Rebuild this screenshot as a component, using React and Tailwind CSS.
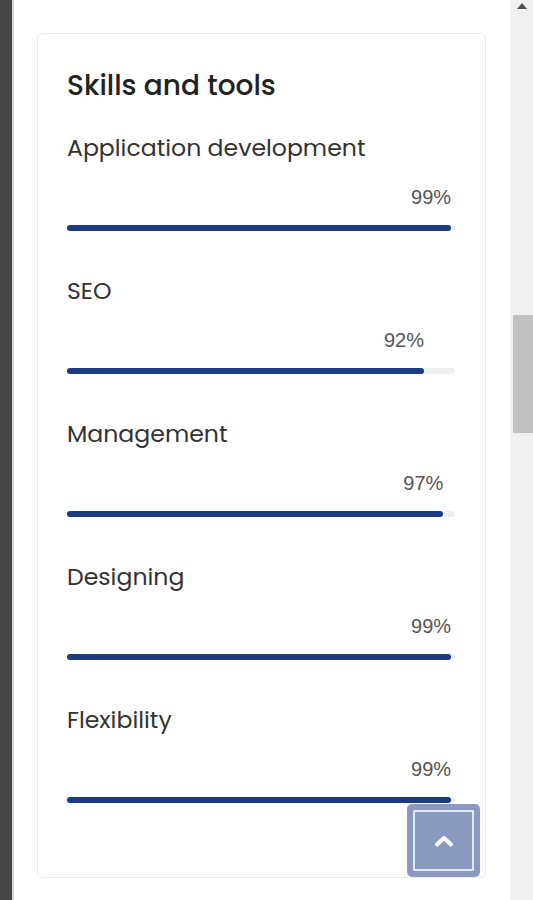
import React from "react";

const skills = [
  { name: "Application development", value: 99 },
  { name: "SEO", value: 92 },
  { name: "Management", value: 97 },
  { name: "Designing", value: 99 },
  { name: "Flexibility", value: 99 },
];

export default function App() {
  return (
    <div className="relative flex w-[533px] h-[900px] overflow-hidden bg-white">
      <div className="w-[12px] h-full bg-[#464646]" />
      <div className="w-[2px] h-full bg-[#d6d6d6]" />
      <div className="flex-1 h-full bg-white pl-[23px] pt-[33px]">
        <div className="w-[449px] h-[845px] border border-[#ececec] rounded-[6px] pl-[29px] pr-[30px] pt-[34px]">
          <h2
            className="text-[28px] leading-[36px] text-[#222] font-medium"
            style={{ fontFamily: "Poppins, 'Noto Sans', sans-serif" }}
          >
            Skills and tools
          </h2>
          <div className="flex flex-col mt-[27px]">
            {skills.map((s) => (
              <div key={s.name} className="h-[143px]">
                <div
                  className="text-[23.6px] leading-[34px] text-[#333]"
                  style={{ fontFamily: "Poppins, 'Noto Sans', sans-serif" }}
                >
                  {s.name}
                </div>
                <div className="w-[388px] mt-[20px]">
                  <div className="relative h-[24px]" style={{ width: `${s.value}%` }}>
                    <span
                      className="absolute right-0 top-0 text-[20px] leading-[24px] text-[#555]"
                      style={{ fontFamily: "'Liberation Sans', Arial, sans-serif" }}
                    >
                      {s.value}%
                    </span>
                  </div>
                  <div className="mt-[16px] h-[6px] w-full rounded-full bg-[#efefef]">
                    <div className="h-full rounded-full bg-[#1c3a80]" style={{ width: `${s.value}%` }} />
                  </div>
                </div>
              </div>
            ))}
          </div>
        </div>
      </div>
      <div className="relative w-[23px] h-full bg-[#f1f1f1]">
        <div className="absolute left-[7px] top-[3px] w-0 h-0 border-l-[5px] border-r-[5px] border-b-[6px] border-l-transparent border-r-transparent border-b-[#505050]" />
        <div className="absolute left-[3px] top-[315px] w-[20px] h-[118px] bg-[#c1c1c1]" />
      </div>
      <div className="absolute left-[407px] top-[804px] w-[73px] h-[73px] rounded-[5px] bg-[#8a9abf] p-[6px]">
        <div className="w-full h-full border-2 border-white/75 rounded-[1px] flex items-center justify-center">
          <svg width="22" height="14" viewBox="0 0 22 14" fill="none">
            <path d="M4 10.5 L11 4 L18 10.5" stroke="white" strokeWidth="4" strokeLinecap="round" strokeLinejoin="round" />
          </svg>
        </div>
      </div>
    </div>
  );
}
